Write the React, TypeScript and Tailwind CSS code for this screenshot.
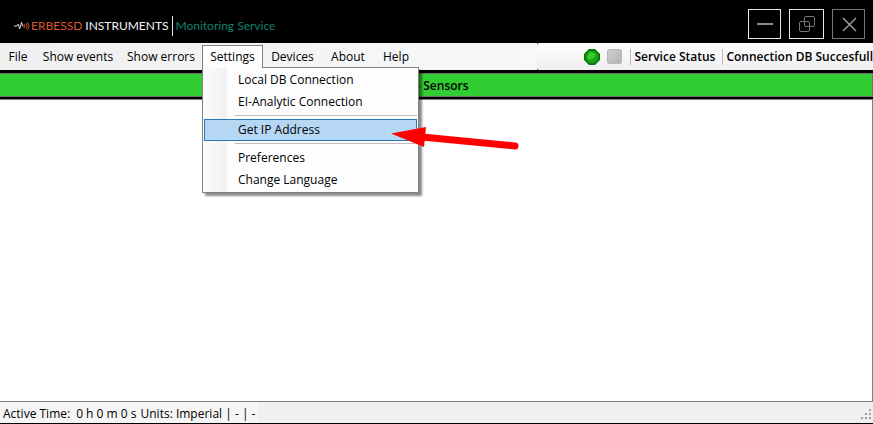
import React, { useState } from 'react';

const menus = [
    { name: 'File', width: 'w-9' },
    { name: 'Show events', width: 'w-[84px]' },
    { name: 'Show errors', width: 'w-[82px]' },
    { name: 'Settings', width: 'w-[61px]' },
    { name: 'Devices', width: 'w-[59px]' },
    { name: 'About', width: 'w-[52px]' },
    { name: 'Help', width: 'w-11' },
];

const settingsItems = [
    ['Local DB Connection', 'EI-Analytic Connection'],
    ['Get IP Address'],
    ['Preferences', 'Change Language'],
];

const TitleBar: React.FC = () => {
    return (
        <header className="flex h-[43px] items-center justify-between bg-black pl-3 pr-2">
            <div className="flex items-center pt-2 font-['Lato',sans-serif] text-[12px] leading-5 whitespace-nowrap">
                <svg width="17" height="12" viewBox="0 0 18 12" fill="none" className="ml-0.5" aria-hidden="true">
                    <path d="M0 6h3l1.500-2 1.500 5 2-7 1 4h1" stroke="#e5e5e5" />
                    <path d="M10.500 4q1.500 2 0 4M12.500 3q2.500 3 0 6M14.500 2q3 4 0 8" stroke="#d9572b" />
                </svg>
                <span className="text-[#d9572b]">ERBESSD</span>
                <span className="ml-[3px] text-gray-100">INSTRUMENTS</span>
                <span className="mx-[3px] h-5 w-px bg-gray-200" />
                <span className="text-[#14806a]">Monitoring Service</span>
            </div>
            <div className="flex pt-1">
                <button aria-label="Minimize" className="flex h-[30px] w-[33px] items-center justify-center border border-gray-200 text-gray-400">
                    <svg width="18" height="18" viewBox="0 0 18 18"><path d="M1 9h16" stroke="#8a8a8a" strokeWidth="2" /></svg>
                </button>
                <button aria-label="Restore" className="ml-2 flex h-[30px] w-[35px] items-center justify-center border border-gray-200 text-[#777777]">
                    <svg width="18" height="18" viewBox="0 0 18 18" fill="none" stroke="currentColor">
                        <rect x="6.500" y="1.500" width="10" height="10" rx="1.500" />
                        <rect x="1.500" y="6.500" width="10" height="10" rx="1.500" />
                    </svg>
                </button>
                <button aria-label="Close" className="ml-2 flex h-[30px] w-[33px] items-center justify-center border border-[#777777] text-[#999999]">
                    <svg width="18" height="18" viewBox="0 0 18 18"><path d="M3 3l13 13M16 3L3 16" stroke="currentColor" strokeWidth="1.500" /></svg>
                </button>
            </div>
        </header>
    );
}

const SettingsMenu: React.FC = () => {
    return (
        <div className="absolute top-[21px] -left-px z-10 w-[217px] border border-[#808080] bg-[#fdfdfd] p-px shadow-[3px_3px_2px_rgba(0,0,0,0.45)]">
            <div className="absolute inset-y-0 left-0 w-6 bg-linear-to-r from-[#fcfcfc] to-[#f0f0f0]" />
            {/* hides the border under the open tab */}
            <div className="absolute -top-px left-0 h-px w-[59px] bg-[#fdfdfd]" />
            {settingsItems.map((group, i) => (
                <div key={i} className="relative">
                    {i > 0 && <hr className="my-[2px] ml-[31px] h-[2px] border-0 border-t border-[#bdbdbd]" />}
                    {group.map((item) => (
                        <button
                            key={item}
                            className={item === 'Get IP Address'
                                ? 'block h-[22px] w-full border border-[#2a78b8] bg-[#b5d7f3] pl-[33px] text-left'
                                : 'block h-[22px] w-full border border-transparent pl-[33px] text-left'}
                        >
                            {item}
                        </button>
                    ))}
                </div>
            ))}
        </div>
    );
}

const App: React.FC = () => {
    const [open, setOpen] = useState('Settings');

    return (
        <div className="relative flex min-h-screen flex-col overflow-hidden bg-black font-['Open_Sans',sans-serif] text-[12px] leading-5 text-black">
            <TitleBar />
            <div className="flex h-[27px] whitespace-nowrap">
                <nav className="flex flex-1 items-start bg-linear-to-r from-[#f0f0f0] to-[#f7f8f8] pt-[2px]">
                    {menus.map(({ name, width }) => (
                        <div key={name} className={`relative shrink-0 ${width}`}>
                            <div
                                className={name === open
                                    ? 'h-[22px] border border-b-0 border-[#808080] bg-[#fdfdfd]'
                                    : 'h-[22px] border border-b-0 border-transparent'}
                            >
                                <button className="w-full text-center leading-[22px]" onClick={() => setOpen(open === name ? '' : name)}>{name}</button>
                            </div>
                            {name === 'Settings' && open === name && (
                                <div className="absolute top-px left-px">
                                    <SettingsMenu />
                                </div>
                            )}
                        </div>
                    ))}
                </nav>
                <div className="flex items-center justify-end rounded-l-[2px] bg-linear-to-b from-[#fdfdfd] to-[#f0f0f0] pl-[46px] font-semibold">
                    <svg width="18" height="18" viewBox="0 0 18 18" aria-hidden="true">
                        <path d="M6 1h6l5 5v6l-5 5H6l-5-5V6z" fill="#08780c" />
                        <path d="M6.500 3h5L15 6.500v5L11.500 15h-5L3 11.500v-5z" fill="#18a512" />
                        <path d="M6 5l3-1 4 2-2 4-5 2-2-3z" fill="#3fc52f" />
                    </svg>
                    <span className="ml-1.5 h-[15px] w-[15px] rounded-xs border border-[#b8b8b8] bg-linear-to-br from-[#d0d0d0] to-[#b4b4b4]" />
                    <span className="ml-2 h-4 w-px bg-[#bdbdbd]" />
                    <span className="px-[3px]">Service Status</span>
                    <span className="ml-1 h-4 w-px bg-[#bdbdbd]" />
                    <span className="pl-[3px]">Connection DB Succesfull</span>
                </div>
            </div>
            <div className="mt-[3px] border border-l-0 border-[#707070] bg-[#32cd32] text-center font-semibold">
                <div className="h-[22px] leading-6">No Sensors</div>
            </div>
            <main className="mt-[2px] flex-1 border-y border-r border-[#808080] bg-white" />
            <footer className="mb-px flex h-[21px] items-center justify-between bg-[#f0f0f0] whitespace-nowrap">
                <div className="flex h-full bg-[#f5f5f5] px-[3px] leading-6 whitespace-pre">
                    <span className="mr-1.5">Active Time:</span>
                    <span className="mr-1">0 h 0 m 0 s</span>
                    <span>Units: Imperial | - | -</span>
                </div>
                <svg width="13" height="13" viewBox="0 0 13 13" fill="#a0a0a0" className="mt-1" aria-hidden="true">
                    <path d="M9 1h2v2h-2zM9 5h2v2h-2zM5 5h2v2h-2zM9 9h2v2h-2zM5 9h2v2h-2zM1 9h2v2h-2z" />
                </svg>
            </footer>
            {/* pointer arrow over the menu */}
            <svg className="pointer-events-none absolute top-[120px] left-[388px] z-20" width="134" height="36" viewBox="0 0 134 36" aria-hidden="true">
                <path d="M34 17L127 26" stroke="#fe0000" strokeWidth="7" strokeLinecap="round" />
                <path d="M3 13.500L38 7L36 27z" fill="#fe0000" />
            </svg>
        </div>
    );
}

export default App;
